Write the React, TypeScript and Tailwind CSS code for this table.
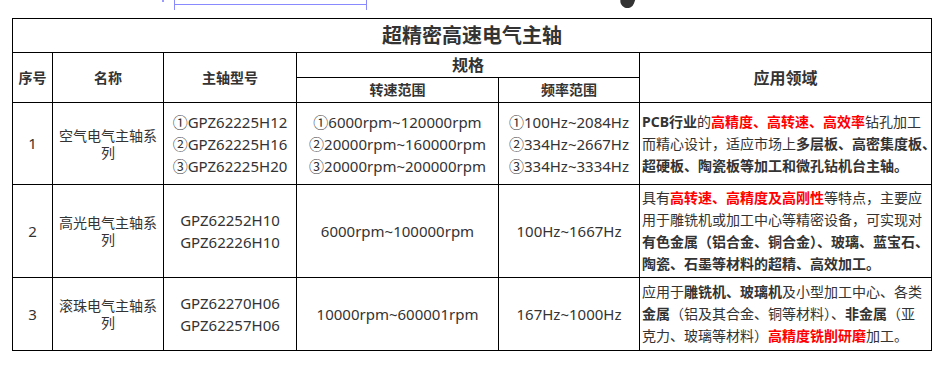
import React from "react";

const cjk = { fontFamily: '"Noto Sans", "Noto Sans CJK SC", sans-serif' };

const R = ({ children }: { children: React.ReactNode }) => (
  <span className="font-bold text-[#ff0000]">{children}</span>
);
const B = ({ children }: { children: React.ReactNode }) => (
  <span className="font-bold">{children}</span>
);

export default function App() {
  const td = "border border-black p-0 align-middle";
  return (
    <div className="w-[936px] h-[371px] bg-white text-[#333]" style={cjk}>
      <div className="relative h-[18px]">
        <div className="absolute left-[162px] top-0 w-[2px] h-[2px] bg-[#9a9aff]" />
        <div className="absolute left-[174px] top-0 w-px h-[10px] bg-[#8a8aff]" />
        <div className="absolute left-[174px] top-[4px] w-[193px] h-px bg-[#8a8aff]" />
        <div className="absolute left-[366px] top-0 w-px h-[10px] bg-[#8a8aff]" />
        <div className="absolute left-[620px] top-[-4px] w-[14px] h-[12px] rounded-b-full bg-[#333] rotate-[20deg]" />
      </div>
      <table className="ml-[12px] border-collapse table-fixed w-[919px]">
        <colgroup>
          <col className="w-[40px]" />
          <col className="w-[111px]" />
          <col className="w-[133px]" />
          <col className="w-[202px]" />
          <col className="w-[141px]" />
          <col className="w-[292px]" />
        </colgroup>
        <tbody>
          <tr className="h-[34px]">
            <td colSpan={6} className={`${td} text-center text-[20px] font-bold leading-[24px]`}>
              超精密高速电气主轴
            </td>
          </tr>
          <tr className="h-[25px]">
            <td rowSpan={2} className={`${td} text-center text-[14px] font-bold`}>序号</td>
            <td rowSpan={2} className={`${td} text-center text-[14px] font-bold`}>名称</td>
            <td rowSpan={2} className={`${td} text-center text-[14px] font-bold`}>主轴型号</td>
            <td colSpan={2} className={`${td} text-center text-[16px] font-bold leading-[20px]`}>规格</td>
            <td rowSpan={2} className={`${td} text-center text-[16px] font-bold`}>应用领域</td>
          </tr>
          <tr className="h-[25px]">
            <td className={`${td} text-center text-[14px] font-bold leading-[20px]`}>转速范围</td>
            <td className={`${td} text-center text-[14px] font-bold leading-[20px]`}>频率范围</td>
          </tr>
          <tr className="h-[82px]">
            <td className={`${td} text-center text-[15px]`}>1</td>
            <td className={`${td} text-center text-[14px] leading-[17px]`}>空气电气主轴系<br />列</td>
            <td className={`${td} text-center text-[15px] leading-[22px] whitespace-nowrap`}>
              ①GPZ62225H12<br />②GPZ62225H16<br />③GPZ62225H20
            </td>
            <td className={`${td} text-center text-[15px] leading-[22px] whitespace-nowrap`}>
              ①6000rpm~120000rpm<br />②20000rpm~160000rpm<br />③20000rpm~200000rpm
            </td>
            <td className={`${td} text-center text-[15px] leading-[22px] whitespace-nowrap`}>
              ①100Hz~2084Hz<br />②334Hz~2667Hz<br />③334Hz~3334Hz
            </td>
            <td className={`${td} pl-[2px] text-[14px] leading-[22px] whitespace-nowrap`}>
              <B>PCB行业</B>的<R>高精度、高转速、高效率</R>钻孔加工<br />
              而精心设计，适应市场上<B>多层板、高密集度板、</B><br />
              <B>超硬板、陶瓷板等加工和微孔钻机台主轴。</B>
            </td>
          </tr>
          <tr className="h-[93px]">
            <td className={`${td} text-center text-[15px]`}>2</td>
            <td className={`${td} text-center text-[14px] leading-[17px]`}>高光电气主轴系<br />列</td>
            <td className={`${td} text-center text-[15px] leading-[22px] whitespace-nowrap`}>
              GPZ62252H10<br />GPZ62226H10
            </td>
            <td className={`${td} text-center text-[15px] leading-[22px] whitespace-nowrap`}>
              6000rpm~100000rpm
            </td>
            <td className={`${td} text-center text-[15px] leading-[22px] whitespace-nowrap`}>
              100Hz~1667Hz
            </td>
            <td className={`${td} pl-[2px] text-[14px] leading-[22px] whitespace-nowrap`}>
              具有<R>高转速、高精度及高刚性</R>等特点，主要应<br />
              用于雕铣机或加工中心等精密设备，可实现对<br />
              <B>有色金属（铝合金、铜合金）、玻璃、蓝宝石、</B><br />
              <B>陶瓷、石墨等材料的超精、高效加工。</B>
            </td>
          </tr>
          <tr className="h-[73px]">
            <td className={`${td} text-center text-[15px]`}>3</td>
            <td className={`${td} text-center text-[14px] leading-[17px]`}>滚珠电气主轴系<br />列</td>
            <td className={`${td} text-center text-[15px] leading-[22px] whitespace-nowrap`}>
              GPZ62270H06<br />GPZ62257H06
            </td>
            <td className={`${td} text-center text-[15px] leading-[22px] whitespace-nowrap`}>
              10000rpm~600001rpm
            </td>
            <td className={`${td} text-center text-[15px] leading-[22px] whitespace-nowrap`}>
              167Hz~1000Hz
            </td>
            <td className={`${td} pl-[2px] text-[14px] leading-[22px] whitespace-nowrap`}>
              应用于<B>雕铣机、玻璃机</B>及小型加工中心、各类<br />
              <B>金属</B>（铝及其合金、铜等材料）、<B>非金属</B>（亚<br />
              克力、玻璃等材料）<R>高精度铣削研磨</R>加工。
            </td>
          </tr>
        </tbody>
      </table>
    </div>
  );
}
